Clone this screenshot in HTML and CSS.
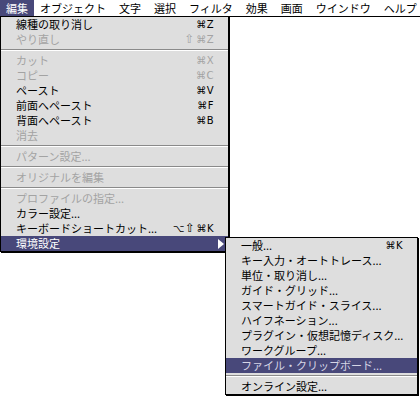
FILE: index.html
```html
<!DOCTYPE html>
<html lang="ja">
<head>
<meta charset="utf-8">
<title>編集メニュー</title>
<link rel="stylesheet" href="styles.css">
</head>
<body>
<div class="menubar">
  <span class="mb-item active">編集</span>
  <span class="mb-item">オブジェクト</span>
  <span class="mb-item">文字</span>
  <span class="mb-item">選択</span>
  <span class="mb-item">フィルタ</span>
  <span class="mb-item">効果</span>
  <span class="mb-item">画面</span>
  <span class="mb-item">ウインドウ</span>
  <span class="mb-item">ヘルプ</span>
</div>

<div class="menu main-menu">
  <div class="row"><span class="label">線種の取り消し</span><span class="key">⌘Z</span></div>
  <div class="row disabled"><span class="label">やり直し</span><span class="key"><span class="shift">⇧</span>⌘Z</span></div>
  <div class="sep"></div>
  <div class="row disabled"><span class="label">カット</span><span class="key">⌘X</span></div>
  <div class="row disabled"><span class="label">コピー</span><span class="key">⌘C</span></div>
  <div class="row"><span class="label">ペースト</span><span class="key">⌘V</span></div>
  <div class="row"><span class="label">前面へペースト</span><span class="key">⌘F</span></div>
  <div class="row"><span class="label">背面へペースト</span><span class="key">⌘B</span></div>
  <div class="row disabled"><span class="label">消去</span></div>
  <div class="sep"></div>
  <div class="row disabled"><span class="label">パターン設定...</span></div>
  <div class="sep"></div>
  <div class="row disabled"><span class="label">オリジナルを編集</span></div>
  <div class="sep"></div>
  <div class="row disabled"><span class="label">プロファイルの指定...</span></div>
  <div class="row"><span class="label">カラー設定...</span></div>
  <div class="row"><span class="label">キーボードショートカット...</span><span class="key">⌥<span class="shift">⇧</span>⌘K</span></div>
  <div class="row selected"><span class="label">環境設定</span><span class="arrow"></span></div>
</div>

<div class="menu sub-menu">
  <div class="row"><span class="label">一般...</span><span class="key">⌘K</span></div>
  <div class="row"><span class="label">キー入力・オートトレース...</span></div>
  <div class="row"><span class="label">単位・取り消し...</span></div>
  <div class="row"><span class="label">ガイド・グリッド...</span></div>
  <div class="row"><span class="label">スマートガイド・スライス...</span></div>
  <div class="row"><span class="label">ハイフネーション...</span></div>
  <div class="row"><span class="label">プラグイン・仮想記憶ディスク...</span></div>
  <div class="row"><span class="label">ワークグループ...</span></div>
  <div class="row selected"><span class="label">ファイル・クリップボード...</span></div>
  <div class="sep"></div>
  <div class="row"><span class="label">オンライン設定...</span></div>
</div>
</body>
</html>
```

FILE: styles.css
```css
html, body {
  margin: 0;
  padding: 0;
  background: #ffffff;
}

body {
  width: 420px;
  height: 396px;
  position: relative;
  overflow: hidden;
  font-family: "Noto Sans CJK JP", "DejaVu Sans", sans-serif;
  font-size: 11px;
  color: #000000;
}

.menubar {
  display: flex;
  height: 16px;
  line-height: 16px;
  border-bottom: 1px solid #000000;
  background: #ffffff;
}

.mb-item {
  padding: 0 6px;
  margin-right: 1px;
  white-space: nowrap;
}

.mb-item.active {
  background: #48487a;
  color: #ffffff;
  margin-right: 0;
}

.menu {
  position: absolute;
  background: #dedede;
  border: 1px solid #000000;
  box-shadow: 1px 1px 0 #000000;
}

.main-menu {
  left: 0;
  top: 16px;
  width: 227px;
}

.sub-menu {
  left: 225px;
  top: 237px;
  width: 191px;
}

.row {
  display: flex;
  align-items: center;
  height: 15px;
  line-height: 15px;
  padding: 0 14px 0 15px;
  white-space: nowrap;
}

.label {
  flex: 1;
}

.key {
  font-family: "DejaVu Sans", sans-serif;
  font-size: 10px;
  letter-spacing: 0.5px;
}

.shift {
  font-size: 12px;
  margin-right: 1px;
}

.disabled {
  color: #a3a3a3;
}

.selected {
  background: #48487a;
  color: #ffffff;
}

.sub-menu .selected {
  color: #d6d6e6;
}

.arrow {
  width: 0;
  height: 0;
  margin-right: -10px;
  border-top: 5px solid transparent;
  border-bottom: 5px solid transparent;
  border-left: 6px solid #ffffff;
}

.sep {
  height: 6px;
  box-sizing: border-box;
  border-top: 2px solid transparent;
}

.sep::before {
  content: "";
  display: block;
  height: 1px;
  background: #8a8a8a;
}

.sep::after {
  content: "";
  display: block;
  height: 1px;
  background: #ffffff;
}
```
